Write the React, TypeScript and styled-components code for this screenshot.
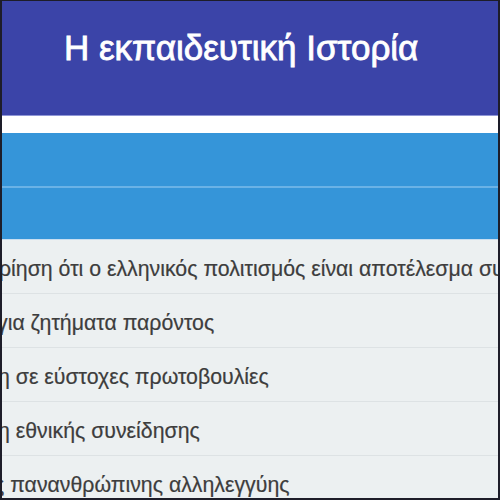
import styled, { createGlobalStyle } from 'styled-components'

const GlobalStyle = createGlobalStyle`
  html, body {
    margin: 0;
    padding: 0;
    background: #ffffff;
  }
  body {
    font-family: "Liberation Sans", Arial, sans-serif;
  }
`

const items = [
  { text: 'ρίηση ότι ο ελληνικός πολιτισμός είναι αποτέλεσμα συνεχούς δημιουργίας', shift: 3 },
  { text: 'για ζητήματα παρόντος', shift: 5 },
  { text: 'η σε εύστοχες πρωτοβουλίες', shift: 4 },
  { text: 'η εθνικής συνείδησης', shift: 4 },
  { text: 'ς πανανθρώπινης αλληλεγγύης', shift: 8 },
]

function App() {
  return (
    <>
      <GlobalStyle />
      <Frame>
        <Header>
          <Title>Η εκπαιδευτική Ιστορία</Title>
        </Header>
        <Tabs>
          <TabBar />
          <TabBar />
        </Tabs>
        <List>
          {items.map((item) => (
            <Row key={item.text}>
              <RowText $shift={item.shift}>{item.text}</RowText>
            </Row>
          ))}
        </List>
      </Frame>
    </>
  )
}

export default App

const Frame = styled.div`
  width: 500px;
  height: 500px;
  box-sizing: border-box;
  border: 2px solid #1d1d29;
  border-top-width: 1px;
  overflow: hidden;
  display: flex;
  flex-direction: column;
  background: #ffffff;
`

const Header = styled.header`
  height: 115px;
  flex-shrink: 0;
  background: #3b44a8;
  border-bottom: 1px solid #8f96d6;
  display: flex;
  align-items: flex-start;
  padding: 25px 0 0 62px;
  box-sizing: border-box;
`

const Title = styled.h1`
  margin: 0;
  color: #ffffff;
  font-size: 35px;
  font-weight: 400;
  line-height: 44px;
  -webkit-text-stroke: 0.8px #ffffff;
`

const Tabs = styled.div`
  margin-top: 17px;
  display: flex;
  flex-direction: column;
  gap: 2px;
  background: #6ab2e6;
  flex-shrink: 0;
`

const TabBar = styled.div`
  height: 53px;
  background: #3595d9;

  &:last-child {
    height: 51px;
  }
`

const List = styled.ul`
  margin: 0;
  padding: 0;
  list-style: none;
  flex: 1;
  background: #ecf0f1;
  border-top: 1px solid #c9def0;
`

const Row = styled.li`
  height: 53px;
  border-bottom: 1px solid #dde2e4;
  display: flex;
  align-items: center;
  overflow: hidden;
  white-space: nowrap;
`

const RowText = styled.span<{ $shift: number }>`
  margin-left: ${(p) => -p.$shift}px;
  font-size: 21.3px;
  color: #3d3d3d;
  padding-top: 6px;
  -webkit-text-stroke: 0.2px #3d3d3d;
`
